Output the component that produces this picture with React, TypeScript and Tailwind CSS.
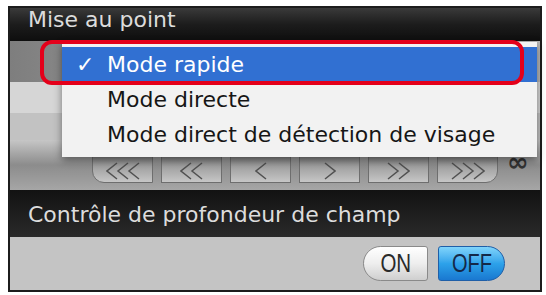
import React from "react";

const font = { fontFamily: '"DejaVu Sans", "Noto Sans", sans-serif' };

function Chevrons({ n, dir }: { n: number; dir: "l" | "r" }) {
  const step = 11;
  const w = 10 + (n - 1) * step;
  return (
    <svg width={w + 2} height={18} viewBox={`0 0 ${w + 2} 18`}>
      {Array.from({ length: n }).map((_, i) => {
        const x = 1 + i * step;
        const d =
          dir === "l"
            ? `M${x + 10} 1 L${x} 9 L${x + 10} 17`
            : `M${x} 1 L${x + 10} 9 L${x} 17`;
        return (
          <path key={i} d={d} fill="none" stroke="#505050" strokeWidth={1.5} />
        );
      })}
    </svg>
  );
}

export default function App() {
  const buttons: { n: number; dir: "l" | "r"; cls: string }[] = [
    { n: 3, dir: "l", cls: "rounded-bl-[12px]" },
    { n: 2, dir: "l", cls: "" },
    { n: 1, dir: "l", cls: "" },
    { n: 1, dir: "r", cls: "" },
    { n: 2, dir: "r", cls: "" },
    { n: 3, dir: "r", cls: "rounded-br-[12px]" },
  ];
  const narrow = { fontFamily: '"Liberation Sans", Arial, sans-serif' };
  return (
    <div className="relative w-[546px] h-[295px] bg-white overflow-hidden" style={font}>
      <div className="ml-[8px] mt-[6px] w-[534px] h-[286px] border-2 border-[#1c1c1c] flex flex-col bg-[#c4c4c4]">
        {/* Header 1 */}
        <div className="h-[33px] bg-gradient-to-b from-[#3a3a3a] via-[#1c1c1c] to-[#0e0e0e] pl-[18px] text-[22px] leading-[24px] text-[#dcdcdc]">
          Mise au point
        </div>
        {/* Middle */}
        <div className="h-[149px] flex flex-col">
          <div className="h-[41px] bg-gradient-to-r from-[#7e7e7e] via-[#a8a8a8] to-[#b8b8b8]" />
          <div className="h-[31px] bg-[#d6d6d6]" />
          <div className="h-[27px] bg-[#c2c2c2]" />
          <div className="h-[50px] bg-gradient-to-b from-[#c6c6c6] via-[#8c8c8c] to-[#a6a6a6] flex items-end pb-[7px] pl-[82px]">
            <div className="flex gap-[8px]">
              {buttons.map((b, i) => (
                <div
                  key={i}
                  className={`w-[61px] h-[30px] border border-[#6e6e6e] bg-gradient-to-b from-[#7a7a7a] via-[#a4a4a4] to-[#c6c6c6] flex items-center justify-center pt-[6px] ${b.cls}`}
                >
                  <Chevrons n={b.n} dir={b.dir} />
                </div>
              ))}
            </div>
            <div className="ml-[9px] self-start mt-[9px] text-[26px] leading-[26px] font-bold text-[#333]">∞</div>
          </div>
        </div>
        {/* Header 2 */}
        <div className="h-[47px] bg-gradient-to-b from-[#121212] via-[#1e1e1e] to-[#2a2a2a] pl-[18px] pt-[13px] text-[22px] leading-[24px] text-[#dcdcdc]">
          Contrôle de profondeur de champ
        </div>
        {/* Bottom */}
        <div className="h-[53px] bg-[#c4c4c4] flex items-start justify-end pr-[35px] pt-[9px] gap-[10px]">
          <div
            className="w-[65px] h-[35px] rounded-l-[18px] rounded-r-[3px] border border-[#8a8a8a] bg-gradient-to-b from-[#ffffff] via-[#eeeeee] to-[#cfcfcf] flex items-center justify-center text-[25px] text-[#2a2a2a]"
            style={narrow}
          >
            <span className="inline-block scale-x-[0.82]">ON</span>
          </div>
          <div
            className="w-[67px] h-[35px] rounded-r-[18px] rounded-l-[3px] border border-[#1f5fa8] bg-gradient-to-b from-[#7fd4fb] via-[#2da2ea] to-[#1a78d0] flex items-center justify-center text-[25px] text-[#142848]"
            style={narrow}
          >
            <span className="inline-block scale-x-[0.8]">OFF</span>
          </div>
        </div>
      </div>

      {/* Popup menu */}
      <div className="absolute left-[62px] top-[42px] w-[475px] h-[115px] bg-[#f2f2f2] shadow-[0_3px_8px_rgba(0,0,0,0.45)] pt-[5px] text-[22px] leading-[24px] text-[#161616]">
        <div className="h-[35px] bg-[#3170d2] text-white flex items-center pl-[14px]">
          <span className="w-[31px]">✓</span>
          <span>Mode rapide</span>
        </div>
        <div className="h-[35px] flex items-center pl-[45px]">Mode directe</div>
        <div className="h-[35px] flex items-center pl-[45px]">Mode direct de détection de visage</div>
      </div>

      {/* Red highlight outline */}
      <div className="absolute left-[40px] top-[40px] w-[484px] h-[45px] border-[4px] border-[#e4001a] rounded-[12px]" />
    </div>
  );
}
